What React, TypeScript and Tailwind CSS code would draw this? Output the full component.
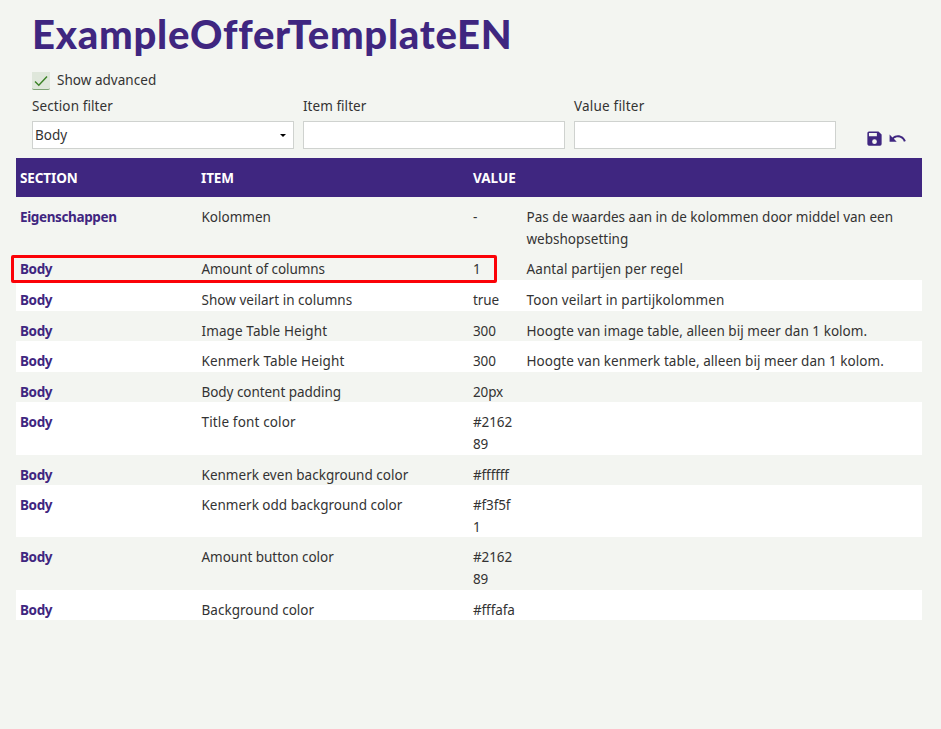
import React from 'react';

type Row = {
  section: string;
  item: string;
  itemTracking: string;
  value: string[];
  note?: string[];
  noteTracking?: string;
  height: string;
  white?: boolean;
};

const rows: Row[] = [
  { section: 'Eigenschappen', item: 'Kolommen', itemTracking: 'tracking-normal', value: ['-'], note: ['Pas de waardes aan in de kolommen door middel van een', 'webshopsetting'], noteTracking: 'tracking-normal', height: 'h-[52px]' },
  { section: 'Body', item: 'Amount of columns', itemTracking: 'tracking-[-0.08px]', value: ['1'], note: ['Aantal partijen per regel'], noteTracking: 'tracking-[0.1px]', height: 'h-[31px]' },
  { section: 'Body', item: 'Show veilart in columns', itemTracking: 'tracking-[0.03px]', value: ['true'], note: ['Toon veilart in partijkolommen'], noteTracking: 'tracking-[0.11px]', height: 'h-[31px]', white: true },
  { section: 'Body', item: 'Image Table Height', itemTracking: 'tracking-[0.11px]', value: ['300'], note: ['Hoogte van image table, alleen bij meer dan 1 kolom.'], noteTracking: 'tracking-[0.04px]', height: 'h-[30px]' },
  { section: 'Body', item: 'Kenmerk Table Height', itemTracking: 'tracking-[0.13px]', value: ['300'], note: ['Hoogte van kenmerk table, alleen bij meer dan 1 kolom.'], noteTracking: 'tracking-[0.04px]', height: 'h-[31px]', white: true },
  { section: 'Body', item: 'Body content padding', itemTracking: 'tracking-[-0.05px]', value: ['20px'], height: 'h-[30px]' },
  { section: 'Body', item: 'Title font color', itemTracking: 'tracking-[0.15px]', value: ['#2162', '89'], height: 'h-[53px]', white: true },
  { section: 'Body', item: 'Kenmerk even background color', itemTracking: 'tracking-[0.02px]', value: ['#ffffff'], height: 'h-[30px]' },
  { section: 'Body', item: 'Kenmerk odd background color', itemTracking: 'tracking-normal', value: ['#f3f5f', '1'], height: 'h-[52px]', white: true },
  { section: 'Body', item: 'Amount button color', itemTracking: 'tracking-[-0.03px]', value: ['#2162', '89'], height: 'h-[53px]' },
  { section: 'Body', item: 'Background color', itemTracking: 'tracking-[0.03px]', value: ['#fffafa'], height: 'h-[30px]', white: true },
];

export default function App() {
  return (
    <div className="relative h-[729px] w-[941px] overflow-hidden bg-[#f3f5f1] font-['Noto_Sans',sans-serif] text-[13.5px] leading-[22px] text-[#333]">
      <h1 className="h-[70px] pl-[32px] font-['Lato',sans-serif] text-[40px] leading-[69px] font-black tracking-[0.74px] whitespace-nowrap text-[#3f2680]">ExampleOfferTemplateEN</h1>
      <div className="flex h-[22px] items-start pl-8">
        <span className="mt-0.5 flex h-[18px] w-[18px] items-center justify-center rounded-b-[2px] border-b border-[#7fa377] bg-[#dfe7db]">
          <svg viewBox="0 0 14 14" className="h-[14px] w-[14px]" fill="none" stroke="#3b8226" strokeWidth="1.4"><path d="M1 7.500l3.800 3.700L13 2.500" /></svg>
        </span>
        <span className="-mt-px ml-[7px] tracking-[0.03px] whitespace-nowrap">Show advanced</span>
      </div>
      <div className="flex h-[66px] gap-[9px] pt-[3px] pl-8">
        <div className="w-[262px]">
          <div className="tracking-[0.1px]">Section filter</div>
          <div className="mt-1 flex h-7 items-center justify-between border border-[#cfd2cf] bg-white pr-[7px] pl-0.5">
            <span>Body</span>
            <svg viewBox="0 0 6 3" className="h-[3px] w-[6px]"><path d="M0 0h6L3 3z" fill="#000" /></svg>
          </div>
        </div>
        <div className="w-[262px]"><div className="tracking-[0.04px]">Item filter</div><div className="mt-1 h-7 border border-[#cfd2cf] bg-white" /></div>
        <div className="w-[262px]"><div className="tracking-[0.2px]">Value filter</div><div className="mt-1 h-7 border border-[#cfd2cf] bg-white" /></div>
        <div className="flex gap-1 pt-[33.500px] pl-[20px]">
          <svg viewBox="0 0 24 24" className="h-[19px] w-[19px]" fill="#3f2680"><path d="M17 3H5a2 2 0 0 0-2 2v14c0 1.100.9 2 2 2h14a2 2 0 0 0 2-2V7l-4-4zm-5 16a3 3 0 1 1 0-6 3 3 0 0 1 0 6zm3-10H5V5h10v4z" /></svg>
          <svg viewBox="0 0 24 24" className="h-[19px] w-[19px]" fill="#3f2680"><path d="M12.500 8c-2.650 0-5.050.99-6.900 2.600L2 7v9h9l-3.620-3.620c1.390-1.160 3.160-1.880 5.120-1.880 3.540 0 6.550 2.310 7.600 5.500l2.370-.78C21.080 11.030 17.150 8 12.500 8z" /></svg>
        </div>
      </div>
      <div className="mx-4 w-[906px]">
        <div className="flex h-[39px] items-center bg-[#3f2680] pl-1 font-bold tracking-[-0.1px] text-white">
          <span className="w-[181px]">SECTION</span><span className="w-[272px]">ITEM</span><span className="tracking-normal">VALUE</span>
        </div>
        {rows.map((r, i) => (
          <div key={i} className={`flex pt-[9px] pl-1 whitespace-nowrap ${r.height} ${r.white ? 'bg-white' : ''}`}>
            <div className="w-[181.500px] shrink-0 font-bold tracking-[-0.38px] text-[#3f2680]">{r.section}</div>
            <div className="w-[271.500px] shrink-0"><span className={r.itemTracking}>{r.item}</span></div>
            <div className="w-[53.500px] shrink-0 tracking-[-0.12px]">{r.value.map((v) => <div key={v}>{v}</div>)}</div>
            <div>{r.note?.map((n) => <div key={n} className={r.noteTracking}>{n}</div>)}</div>
          </div>
        ))}
      </div>
      <div className="absolute top-[255px] left-[11px] h-7 w-[486px] rounded-[2px] border-3 border-[#fb0207]" />
    </div>
  );
}
